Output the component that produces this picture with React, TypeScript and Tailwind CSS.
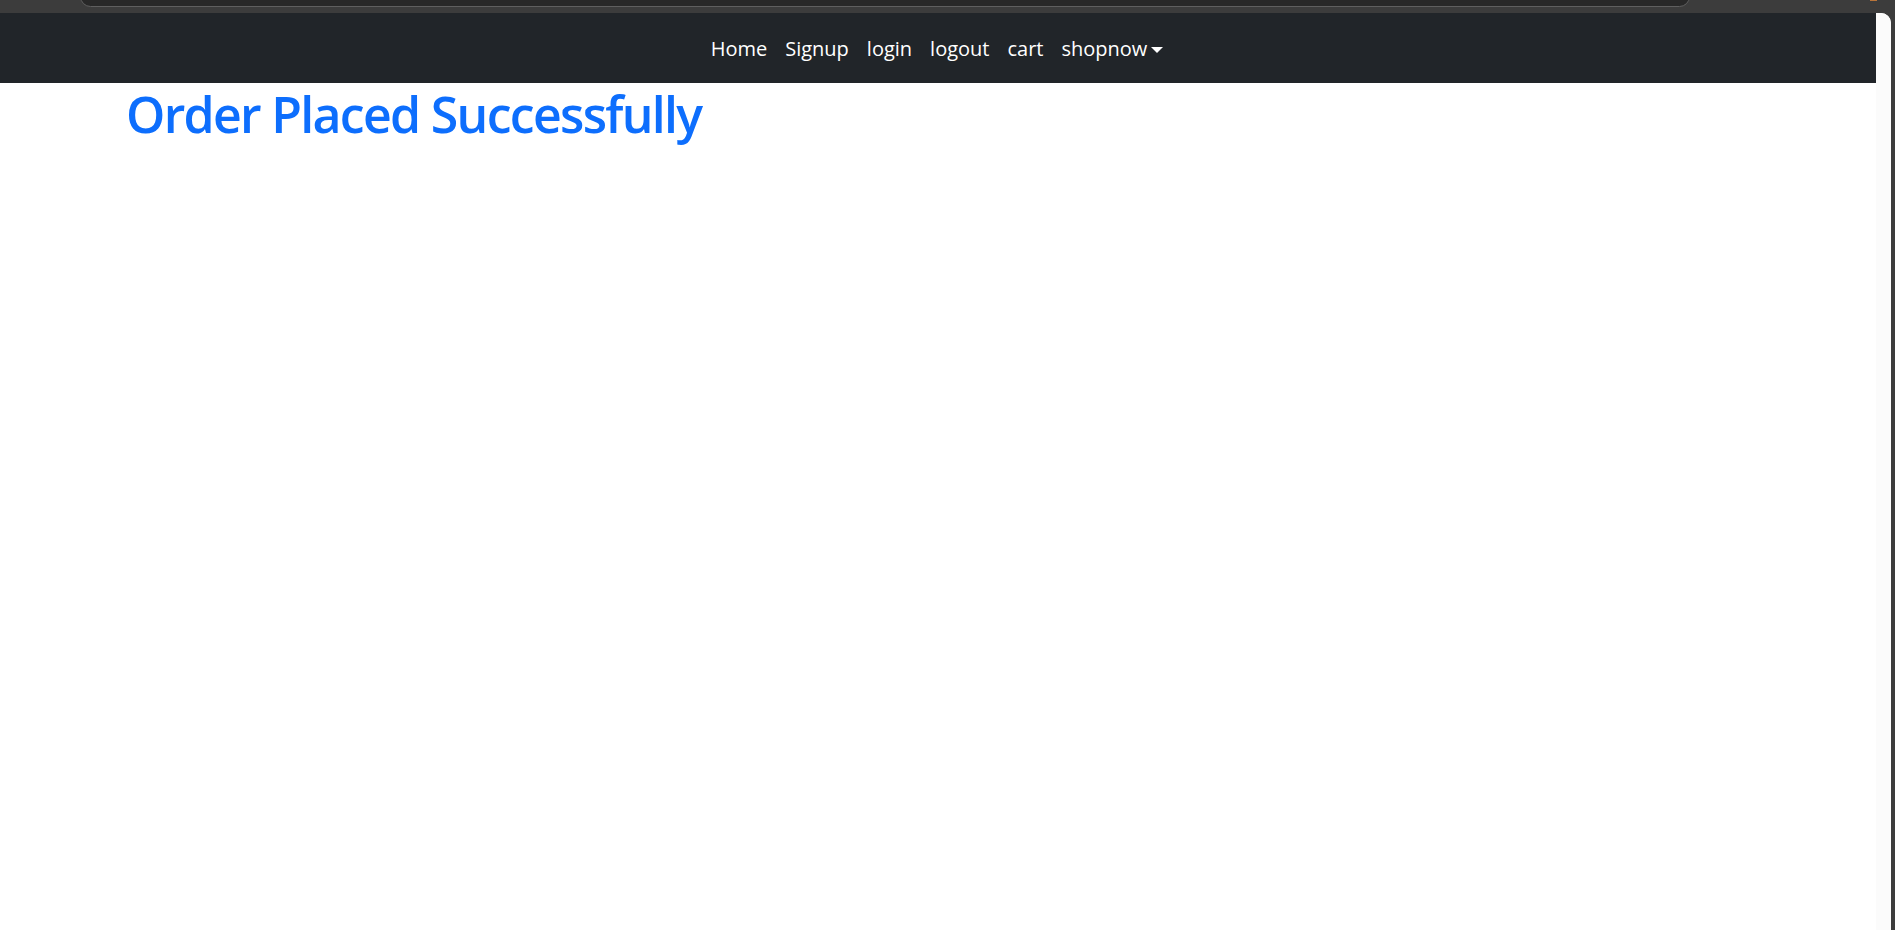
import React from "react";

export default function App() {
  const links = ["Home", "Signup", "login", "logout", "cart"];
  return (
    <div className="h-screen w-full bg-[#3c3c3c] flex flex-col overflow-hidden" style={{ fontFamily: "'Open Sans', 'Noto Sans', sans-serif" }}>
      <div className="h-[13px] shrink-0 flex overflow-hidden">
        <div className="ml-[80px] mt-[-14px] h-[21px] w-[1610px] rounded-[12px] border border-[#5f5f5f] bg-[#282828]" />
        <div className="ml-auto mr-[18px] h-[1px] w-[7px] bg-[#b8743a]" />
      </div>
      <div className="flex-1 flex pr-[4px]">
        <div className="flex-1 flex bg-white rounded-tr-[10px] overflow-hidden">
          <div className="flex-1 flex flex-col">
            <nav className="h-[70px] bg-[#212529] flex items-center justify-center pt-[2px]">
              <ul className="flex items-center gap-[18px] text-[20px] text-white ml-[-2px]">
                {links.map((l) => (
                  <li key={l}>
                    <a className="leading-[30px]">{l}</a>
                  </li>
                ))}
                <li className="flex items-center">
                  <a className="leading-[30px]">shopnow</a>
                  <span className="ml-[4px] mt-[1px] w-0 h-0 border-t-[6px] border-t-white border-x-[6px] border-x-transparent" />
                </li>
              </ul>
            </nav>
            <div className="pl-[126px] pt-[1px]">
              <h1 className="text-[50px] leading-[60px] font-semibold tracking-[-1.7px] text-[#0d6efd]">Order Placed Successfully</h1>
            </div>
          </div>
          <div className="w-[15px] bg-[#fbfbfb]" />
        </div>
      </div>
    </div>
  );
}
